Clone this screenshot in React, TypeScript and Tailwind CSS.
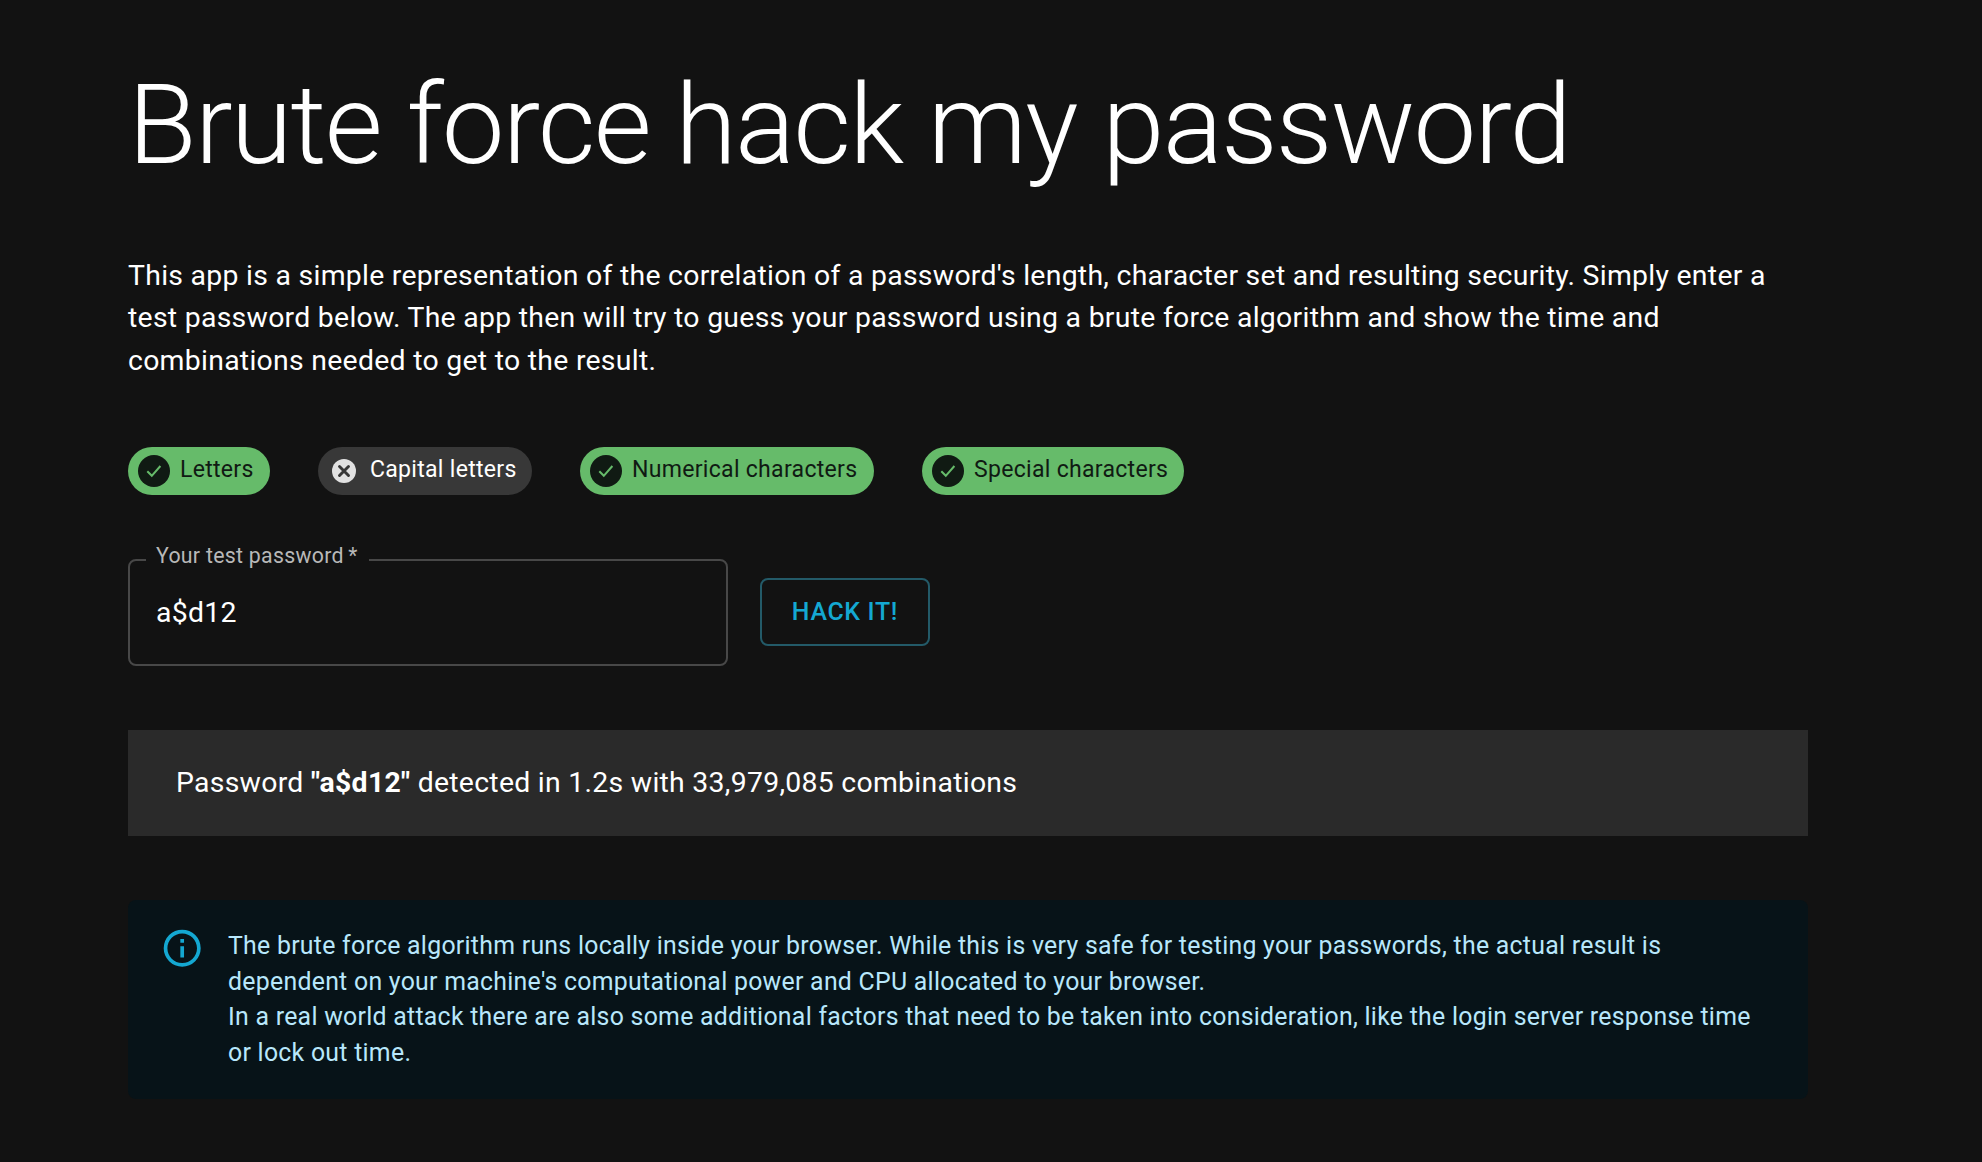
import React from "react";

type ChipProps = { label: string; active: boolean; width: string };

const chips: ChipProps[] = [
  { label: "Letters", active: true, width: "w-[142px]" },
  { label: "Capital letters", active: false, width: "w-[214px]" },
  { label: "Numerical characters", active: true, width: "w-[294px]" },
  { label: "Special characters", active: true, width: "w-[262px]" },
];

function CheckBadge() {
  return (
    <svg viewBox="0 0 32 32" className="size-8 shrink-0" fill="none">
      <circle cx="16" cy="16" r="16" fill="#101a13" />
      <path d="M9.3 16.2l4.5 4.6 8.6-9.8" stroke="#66bb6a" strokeWidth="2" />
    </svg>
  );
}

function CrossBadge() {
  return (
    <svg viewBox="0 0 32 32" className="size-8 shrink-0" fill="none">
      <circle cx="16" cy="16" r="12" fill="#e2e2e2" />
      <path d="M11.5 11.5l9 9M20.5 11.5l-9 9" stroke="#383838" strokeWidth="2.9" strokeLinecap="round" />
    </svg>
  );
}

function Chip({ label, active, width }: ChipProps) {
  return (
    <div
      className={`flex h-12 items-center gap-[10px] rounded-full pl-[10px] ${width} ${
        active ? "bg-[#66bb6a] text-[#101a13]" : "bg-[#383838] text-white"
      }`}
    >
      {active ? <CheckBadge /> : <CrossBadge />}
      <span className="-mt-px whitespace-nowrap text-[23.075px] leading-[34px]">{label}</span>
    </div>
  );
}

export default function App() {
  return (
    <main className="min-h-screen overflow-hidden bg-[#121212] pl-32 pr-[174px] pt-[59px] font-['Roboto',sans-serif] text-[28.4px] leading-[42.6px] tracking-[0.0098em] text-white">
      <h1 className="whitespace-nowrap text-[112px] font-light leading-[131px] tracking-[-0.016em]">
        Brute force hack my password
      </h1>

      <p className="mt-[64.6px]">
        This app is a simple representation of the correlation of a password's length, character set and resulting
        security. Simply enter a<br />
        test password below. The app then will try to guess your password using a brute force algorithm and show the
        time and
        <br />
        combinations needed to get to the result.
      </p>

      <div className="mt-[64.6px] flex gap-12">
        {chips.map((chip) => (
          <Chip key={chip.label} {...chip} />
        ))}
      </div>

      <form className="mt-16 flex items-center gap-8" onSubmit={(e) => e.preventDefault()}>
        <div className="relative h-[107px] w-[600px] rounded-lg border-2 border-[#484848]">
          <label
            htmlFor="password"
            className="absolute -top-5 left-4 w-[223px] whitespace-nowrap bg-[#121212] pl-[10px] text-[21.3px] leading-[30px] text-[#b8b8b8]"
          >
            Your test password&thinsp;*
          </label>
          <input
            id="password"
            defaultValue="a$d12"
            className="h-full w-full bg-transparent px-[26px] tracking-[0.00938em] outline-none"
          />
        </div>
        <button className="h-[68px] w-[170px] rounded-lg border-2 border-[#235a68] pb-[2px] text-[24.85px] font-medium leading-[43.5px] tracking-[0.02857em] text-[#14a8d2]">
          HACK IT!
        </button>
      </form>

      <section className="mt-16 flex h-[106px] items-center bg-[#2a2a2a] px-12">
        <p>
          Password <strong className="font-bold">"a$d12"</strong> detected in 1.2s with 33,979,085 combinations
        </p>
      </section>

      <aside className="mt-[63.7px] flex h-[199.3px] gap-6 rounded-lg bg-[#071318] px-8 text-[24.85px] leading-[35.55px] tracking-[0.011em] text-[#b8e7fb]">
        <svg viewBox="0 0 24 24" className="mt-[26px] size-[44.4px] shrink-0" fill="#14a8d2">
          <path d="M11,9H13V7H11M12,20C7.59,20 4,16.41 4,12C4,7.59 7.59,4 12,4C16.41,4 20,7.59 20,12C20,16.41 16.41,20 12,20M12,2A10,10 0 0,0 2,12A10,10 0 0,0 12,22A10,10 0 0,0 22,12A10,10 0 0,0 12,2M11,17H13V11H11V17Z" />
        </svg>
        <p className="-ml-[0.4px] whitespace-nowrap pt-[28.5px]">
          The brute force algorithm runs locally inside your browser. While this is very safe for testing your
          passwords, the actual result is
          <br />
          dependent on your machine's computational power and CPU allocated to your browser.
          <br />
          In a real world attack there are also some additional factors that need to be taken into consideration, like
          the login server response time
          <br />
          or lock out time.
        </p>
      </aside>
    </main>
  );
}
